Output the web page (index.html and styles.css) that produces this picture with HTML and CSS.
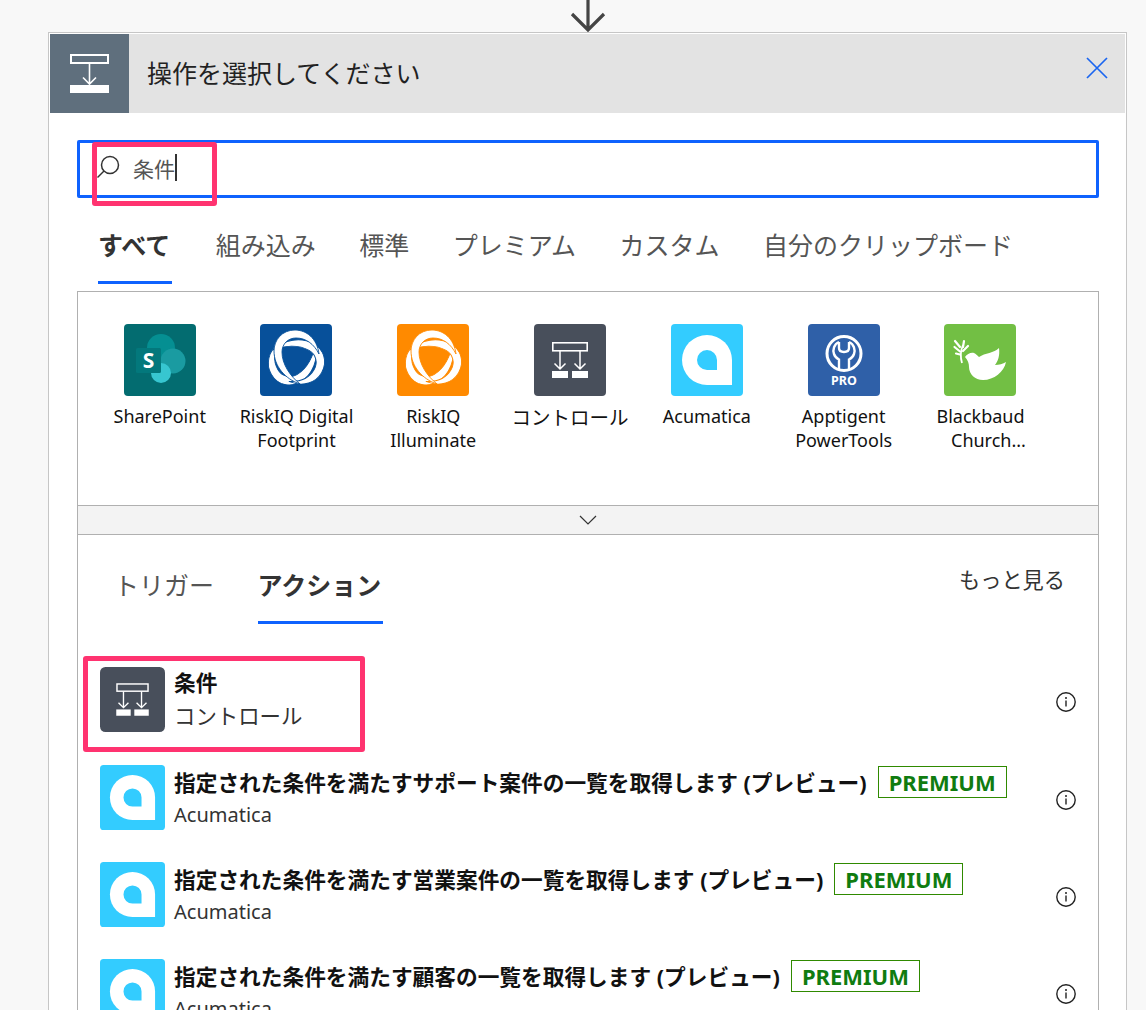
FILE: index.html
```html
<!DOCTYPE html>
<html lang="ja">
<head>
  <meta charset="UTF-8" />
  <title>操作を選択してください</title>
  <link rel="stylesheet" href="styles.css">
</head>

<body>
  <svg class="defs" width="0" height="0">
    <symbol id="ic-control" viewBox="0 0 72 72">
      <rect x="18.8" y="18.8" width="34.4" height="8" fill="none" stroke="#fff" stroke-width="1.6" />
      <path d="M26 27v18M20.500 39.500l5.500 5.500 5.500-5.500M46 27v18M40.500 39.500l5.500 5.500 5.500-5.500" fill="none" stroke="#fff" stroke-width="1.500" />
      <rect x="18" y="47" width="16" height="7" fill="#fff" />
      <rect x="38" y="47" width="16" height="7" fill="#fff" />
    </symbol>
    <symbol id="ic-acumatica" viewBox="0 0 72 72">
      <rect width="72" height="72" rx="4" fill="#33ccff" />
      <path d="M36 11a25 25 0 0 1 25 25v25H36a25 25 0 0 1 0-50z" fill="#fff" />
      <path d="M36 26a10 10 0 0 1 10 10v10H36a10 10 0 0 1 0-20z" fill="#33ccff" />
    </symbol>
    <symbol id="ic-rings" viewBox="0 0 72 72">
      <g fill="#fff" stroke="currentColor" stroke-width="0.9">
        <path d="M59 30C57 14 46 6 35 6C22 6 14 16 14 27C14 42 25 55 40 60C30 52 22 40 22 28C22 20 28 14 36 14C46 14 54 20 59 30Z" transform="rotate(240 36 35)" />
        <path d="M59 30C57 14 46 6 35 6C22 6 14 16 14 27C14 42 25 55 40 60C30 52 22 40 22 28C22 20 28 14 36 14C46 14 54 20 59 30Z" transform="rotate(120 36 35)" />
        <path d="M59 30C57 14 46 6 35 6C22 6 14 16 14 27C14 42 25 55 40 60C30 52 22 40 22 28C22 20 28 14 36 14C46 14 54 20 59 30Z" />
      </g>
    </symbol>
    <symbol id="ic-info" viewBox="0 0 20 20">
      <circle cx="10" cy="10" r="9.2" fill="none" stroke="#222" stroke-width="1.4" />
      <path d="M10 8.500v6" stroke="#222" stroke-width="1.400" />
      <circle cx="10" cy="6" r="1" fill="#222" />
    </symbol>
  </svg>

  <!-- Arrow from previous step -->
  <div class="step-arrow">
    <svg width="38" height="32" viewBox="0 0 38 32">
      <path d="M19 0v30M3 14l16 16 16-16" fill="none" stroke="#444" stroke-width="3.200" />
    </svg>
  </div>

  <div class="card">
    <!-- Header -->
    <div class="card-head">
      <div class="head-icon">
        <svg width="79" height="79" viewBox="0 0 79 79">
          <rect x="21" y="21" width="37" height="8" fill="none" stroke="#fff" stroke-width="2" />
          <path d="M39.500 30v20M33 43.500l6.500 6.500 6.500-6.500" fill="none" stroke="#fff" stroke-width="1.600" />
          <rect x="20" y="51" width="39" height="8" fill="#fff" />
        </svg>
      </div>
      <div class="head-title">操作を選択してください</div>
      <svg class="head-close" width="24" height="24" viewBox="0 0 24 24">
        <path d="M2 1l20 20M22 1L2 21" fill="none" stroke="#1a66f0" stroke-width="1.700" />
      </svg>
    </div>

    <div class="card-body">
      <!-- Search -->
      <div class="search">
        <svg class="search-icon" width="26" height="26" viewBox="0 0 26 26">
          <circle cx="15" cy="11" r="8.500" fill="none" stroke="#333" stroke-width="1.500" />
          <path d="M9 17l-6.500 6.500" fill="none" stroke="#333" stroke-width="1.500" />
        </svg>
        <span class="search-text">条件</span><span class="caret"></span>
      </div>

      <!-- Tabs -->
      <ul class="tabs">
        <li class="active">すべて</li>
        <li>組み込み</li>
        <li>標準</li>
        <li>プレミアム</li>
        <li>カスタム</li>
        <li>自分のクリップボード</li>
      </ul>

      <div class="panel">
        <!-- Connectors -->
        <div class="connectors">
          <div class="tile">
            <svg class="tile-icon" viewBox="0 0 72 72">
              <rect width="72" height="72" rx="4" fill="#036c70" />
              <circle cx="37" cy="24" r="14" fill="#058f92" />
              <circle cx="49" cy="37" r="12.500" fill="#1a9ba1" />
              <circle cx="37" cy="49" r="10" fill="#37c6d0" />
              <rect x="12" y="24" width="25" height="25" rx="1.500" fill="#03787c" />
              <text class="icon-s" x="24.500" y="44" text-anchor="middle">S</text>
            </svg>
            <span>SharePoint</span>
          </div>
          <div class="tile">
            <svg class="tile-icon rings-blue" viewBox="0 0 72 72">
              <rect width="72" height="72" rx="4" fill="#07509a" />
              <use href="#ic-rings" />
            </svg>
            <span>RiskIQ Digital Footprint</span>
          </div>
          <div class="tile">
            <svg class="tile-icon rings-orange" viewBox="0 0 72 72">
              <rect width="72" height="72" rx="4" fill="#ff8a00" />
              <use href="#ic-rings" />
            </svg>
            <span>RiskIQ Illuminate</span>
          </div>
          <div class="tile">
            <svg class="tile-icon" viewBox="0 0 72 72">
              <rect width="72" height="72" rx="4" fill="#484f5b" />
              <use href="#ic-control" />
            </svg>
            <span class="tile-ja">コントロール</span>
          </div>
          <div class="tile">
            <svg class="tile-icon" viewBox="0 0 72 72"><use href="#ic-acumatica" /></svg>
            <span>Acumatica</span>
          </div>
          <div class="tile">
            <svg class="tile-icon" viewBox="0 0 72 72">
              <rect width="72" height="72" rx="4" fill="#2f60a8" />
              <circle cx="36" cy="29.500" r="17" fill="none" stroke="#fff" stroke-width="3" />
              <path d="M31 18C26 20 24.500 26 26 30C27 33 29 34.500 31 35.500V45M41 18C46 20 47.500 26 46 30C45 33 43 34.500 41 35.500V45M31 18V24C31 27 33 28 36 28C39 28 41 27 41 24V18" fill="none" stroke="#fff" stroke-width="2.400" />
              <text class="icon-pro" x="36" y="61" text-anchor="middle">PRO</text>
            </svg>
            <span>Apptigent PowerTools</span>
          </div>
          <div class="tile">
            <svg class="tile-icon" viewBox="0 0 72 72">
              <rect width="72" height="72" rx="4" fill="#72bf44" />
              <path d="M21 33C23 30 27 28 30 29C32 30 33 31 35 33C41 29 50 29 55 24C56 32 54 37 51 41C55 41 59 40 62 38C60 48 50 56 39 56C31 56 25 50 25 43C25 40 24 36 21 33Z" fill="#fff" />
              <path d="M18 39C16.500 34 16 28 19 21" fill="none" stroke="#fff" stroke-width="1.800" />
              <path d="M11 17l5 6M10.500 23l5.500 4.500M12 29.500l4 1M20 17l-1 6M24 22l-5 5" fill="none" stroke="#fff" stroke-width="2.200" stroke-linecap="round" />
            </svg>
            <span>Blackbaud<br><span class="ellip">Church...</span></span>
          </div>
        </div>

        <div class="expand">
          <svg width="18" height="11" viewBox="0 0 18 11">
            <path d="M1 1l8 8 8-8" fill="none" stroke="#333" stroke-width="1.200" />
          </svg>
        </div>

        <!-- Triggers / actions -->
        <div class="sub-head">
          <ul class="tabs sub-tabs">
            <li>トリガー</li>
            <li class="active">アクション</li>
          </ul>
          <div class="more">もっと見る</div>
        </div>

        <div class="actions">
          <div class="action action-first">
            <svg class="action-icon" viewBox="0 0 72 72">
              <rect width="72" height="72" rx="6" fill="#484f5b" />
              <use href="#ic-control" />
            </svg>
            <div class="action-text">
              <div class="action-title">条件</div>
              <div class="action-sub">コントロール</div>
            </div>
            <svg class="info" width="20" height="20"><use href="#ic-info" /></svg>
          </div>
          <div class="action">
            <svg class="action-icon" viewBox="0 0 72 72"><use href="#ic-acumatica" /></svg>
            <div class="action-text">
              <div class="action-title">指定された条件を満たすサポート案件の一覧を取得します (プレビュー)<span class="badge">PREMIUM</span></div>
              <div class="action-sub">Acumatica</div>
            </div>
            <svg class="info" width="20" height="20"><use href="#ic-info" /></svg>
          </div>
          <div class="action">
            <svg class="action-icon" viewBox="0 0 72 72"><use href="#ic-acumatica" /></svg>
            <div class="action-text">
              <div class="action-title">指定された条件を満たす営業案件の一覧を取得します (プレビュー)<span class="badge">PREMIUM</span></div>
              <div class="action-sub">Acumatica</div>
            </div>
            <svg class="info" width="20" height="20"><use href="#ic-info" /></svg>
          </div>
          <div class="action">
            <svg class="action-icon" viewBox="0 0 72 72"><use href="#ic-acumatica" /></svg>
            <div class="action-text">
              <div class="action-title">指定された条件を満たす顧客の一覧を取得します (プレビュー)<span class="badge">PREMIUM</span></div>
              <div class="action-sub">Acumatica</div>
            </div>
            <svg class="info" width="20" height="20"><use href="#ic-info" /></svg>
          </div>
        </div>
      </div>
    </div>
  </div>

  <!-- Pink annotation boxes -->
  <div class="mark mark-search"></div>
  <div class="mark mark-action"></div>
</body>

</html>
```

FILE: styles.css
```css
:root {
  --bg-color: #f8f8f8;
  --line: #b0b0b0;
  --blue: #0f62fe;
  --pink: #ff3370;
  --text-dark: #333333;
}

* {
  margin: 0;
  padding: 0;
  box-sizing: border-box;
}

html, body {
  height: 1010px;
  overflow: hidden;
}

body {
  position: relative;
  font-family: 'Noto Sans', 'Noto Sans CJK JP', sans-serif;
  background-color: var(--bg-color);
  color: #111;
}

ul {
  list-style: none;
}

.defs {
  display: none;
}

.step-arrow {
  display: flex;
  justify-content: center;
  height: 32px;
  padding-left: 30px;
}

.card {
  margin: 0 19px 0 48px;
  padding: 1px;
  height: 978px;
  overflow: hidden;
  background-color: #fff;
  border: 1px solid #c6c6c6;
  border-bottom: 0;
}

.card-head {
  display: flex;
  align-items: center;
  height: 79px;
  background-color: #e3e3e3;
}

.head-icon {
  width: 79px;
  height: 79px;
  background-color: #5f6f7d;
}

.head-title {
  flex: 1;
  padding: 0 0 4px 18px;
  font-size: 25px;
  color: #222;
}

.head-close {
  margin: 0 16px 10px 0;
}

.card-body {
  padding: 27px 26px 0 27px;
}

.search {
  display: flex;
  align-items: center;
  height: 58px;
  padding-left: 15px;
  border: 3px solid var(--blue);
  border-radius: 2px;
}

.search-icon {
  margin: 0 12px 4px 0;
}

.search-text {
  margin-bottom: 3px;
  font-size: 21px;
  color: #555;
}

.caret {
  width: 1.5px;
  height: 27px;
  margin-bottom: 3px;
  background-color: #333;
}

.tabs {
  display: flex;
  gap: 43.5px;
  padding: 22px 0 0 21px;
  margin-bottom: 7px;
}

.tabs li {
  height: 64px;
  line-height: 50px;
  font-size: 25px;
  color: #555;
}

.tabs .active {
  padding: 0 2px 0 0;
  font-weight: bold;
  color: var(--text-dark);
  border-bottom: 3px solid var(--blue);
}

.panel {
  height: 719px;
  overflow: hidden;
  border: 1px solid var(--line);
  border-bottom: 0;
}

.connectors {
  display: grid;
  grid-template-columns: repeat(7, 136.8px);
  height: 213px;
  padding: 32px 0 0 13.3px;
}

.tile {
  display: flex;
  flex-direction: column;
  align-items: center;
  text-align: center;
  font-size: 18px;
  line-height: 24px;
}

.tile-icon {
  flex: none;
  width: 72px;
  height: 72px;
  margin-bottom: 8px;
}

.tile-ja {
  padding-top: 2px;
  font-size: 19.5px;
}

.rings-blue {
  color: #07509a;
}

.rings-orange {
  color: #ff8a00;
}

.icon-s {
  font-size: 21px;
  font-weight: bold;
  fill: #fff;
}

.icon-pro {
  font-size: 12.5px;
  font-weight: bold;
  fill: #fff;
}

.ellip {
  padding-left: 16px;
}

.expand {
  display: flex;
  align-items: center;
  justify-content: center;
  height: 30px;
  background-color: #f3f3f3;
  border-top: 1px solid var(--line);
  border-bottom: 1px solid var(--line);
}

.sub-head {
  display: flex;
  justify-content: space-between;
  height: 90px;
  padding-right: 33px;
}

.sub-tabs {
  padding: 25px 0 0 36px;
  margin: 0;
}

.more {
  padding-top: 28px;
  font-size: 21.2px;
  color: var(--text-dark);
}

.actions {
  padding: 42px 22px 0;
}

.action {
  display: flex;
  height: 97px;
}

.action-first {
  height: 98px;
}

.action-icon {
  flex: none;
  width: 65px;
  height: 65px;
  margin-right: 9px;
}

.action-text {
  flex: 1;
}

.action-title {
  display: flex;
  align-items: center;
  height: 33px;
  font-size: 21.7px;
  font-weight: bold;
}

.action-sub {
  font-size: 20px;
  line-height: 34px;
  color: var(--text-dark);
}

.action-first .action-title {
  height: 28px;
}

.action-first .action-sub {
  line-height: 42px;
  font-size: 21.4px;
}

.badge {
  margin-left: 11px;
  padding: 0 10px;
  line-height: 30px;
  font-size: 22px;
  color: #107c10;
  border: 1px solid #2f8a00;
}

.info {
  flex: none;
  margin: 25px 0 0;
}

.mark {
  position: absolute;
  border: 5px solid var(--pink);
  border-radius: 3px;
}

.mark-search {
  left: 92px;
  top: 142px;
  width: 125px;
  height: 64px;
}

.mark-action {
  left: 83px;
  top: 656px;
  width: 282px;
  height: 96px;
}
```
